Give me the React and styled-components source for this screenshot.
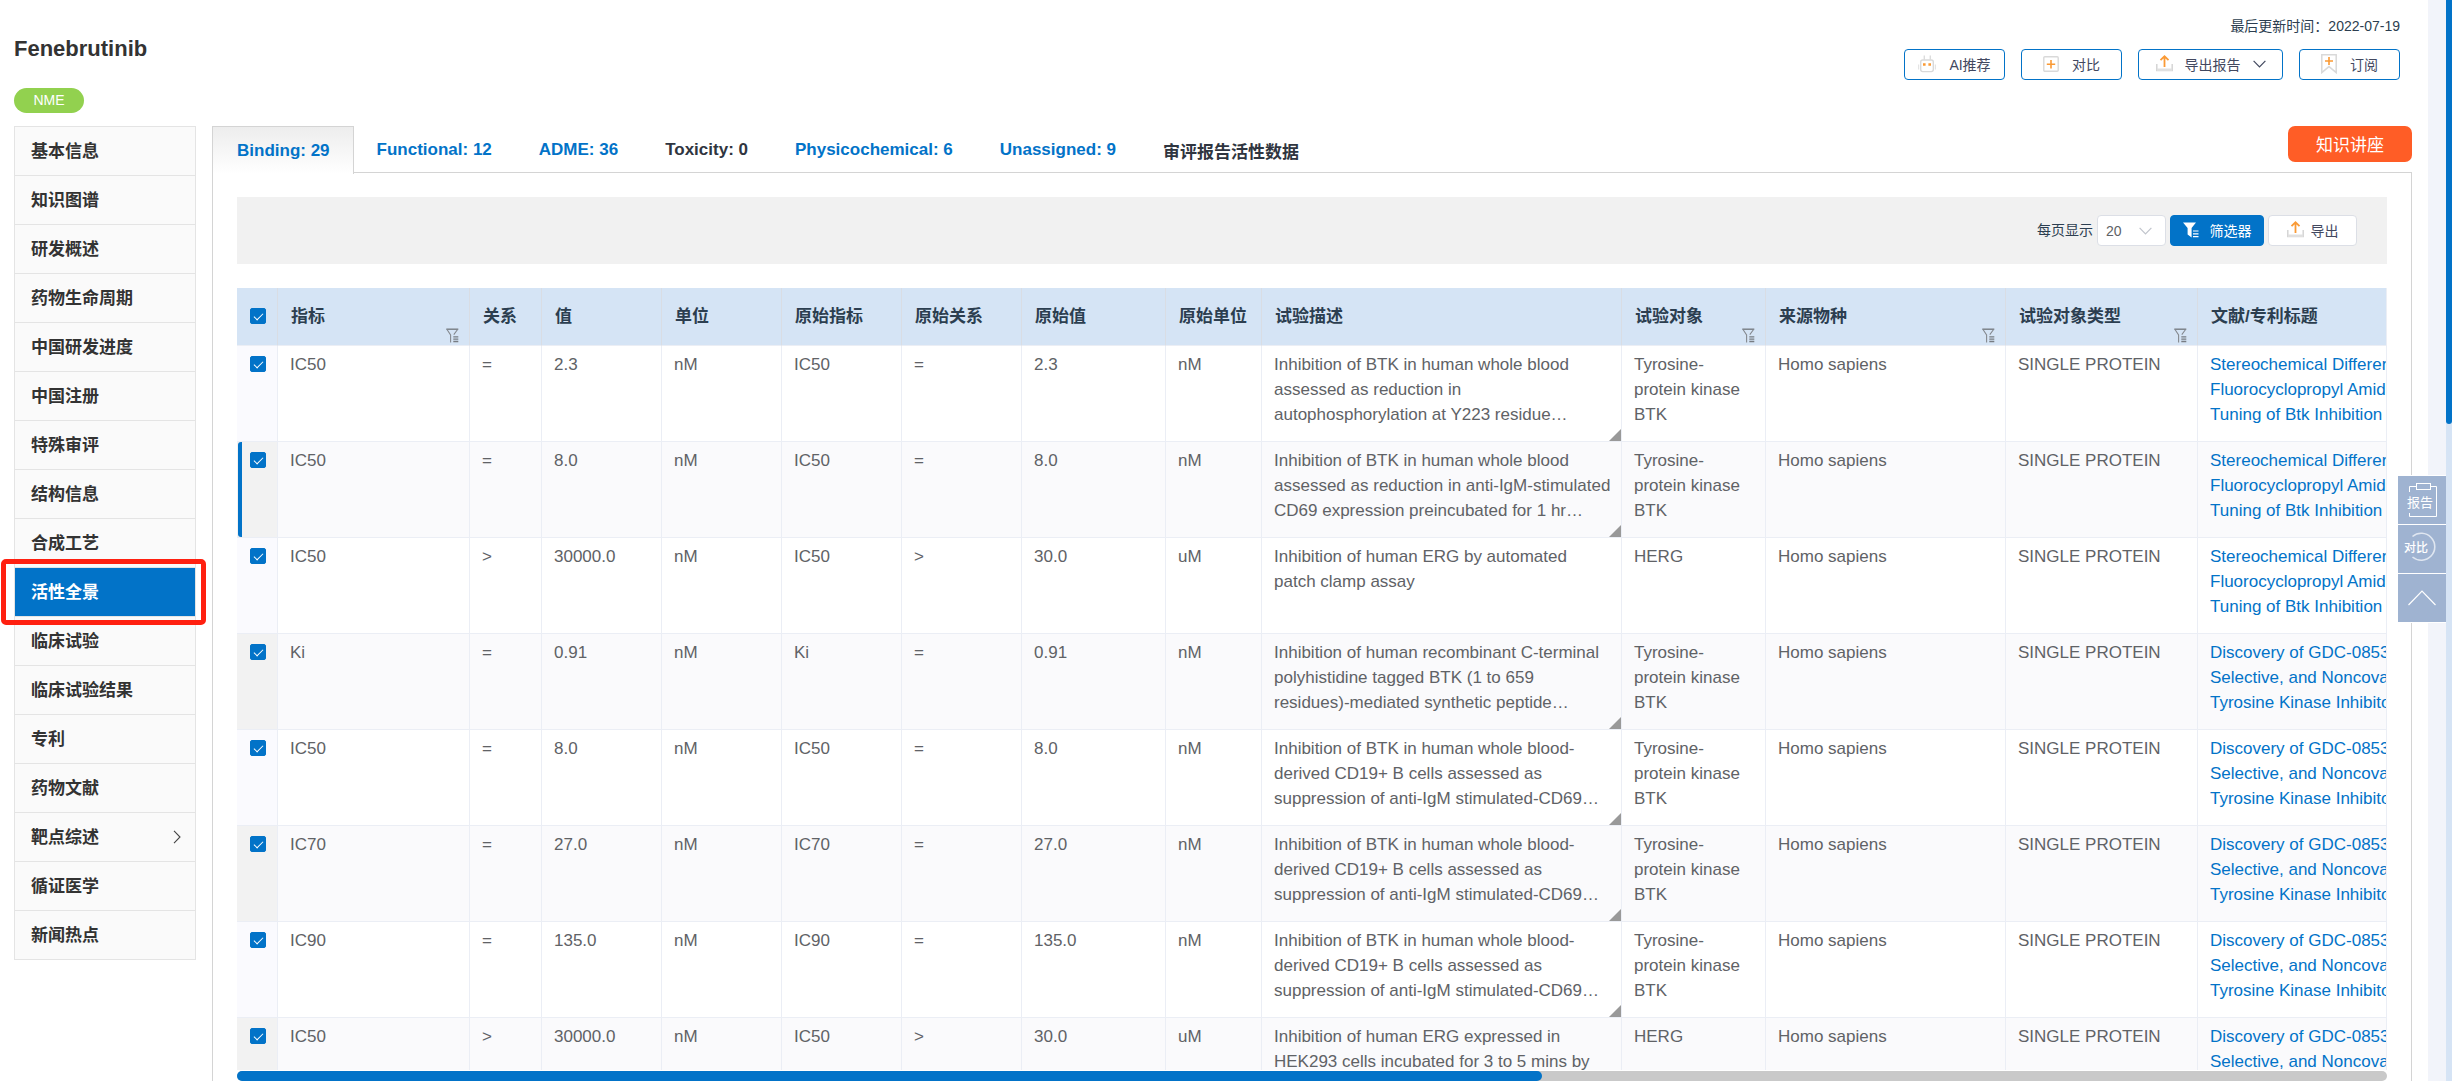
// import packages
import React from "react";
import { useState } from "react";
import styled, { createGlobalStyle } from "styled-components";

const GlobalStyle = createGlobalStyle`
  * {
    box-sizing: border-box;
  }
  body {
    margin: 0;
    background: #ffffff;
    color: #2c3e50;
    font-family: "Liberation Sans", Arial, "Noto Sans CJK SC", sans-serif;
    font-size: 17px;
    line-height: 25px;
  }
  button, select, input {
    margin: 0;
    font-family: inherit;
  }
  a {
    text-decoration: none;
  }
`;

const Page = styled.div`
  display: flex;
  height: 100vh;
  overflow: hidden;
`;

const Content = styled.div`
  display: flex;
  flex: 1;
  flex-direction: column;
  min-width: 0;
  padding: 0 16px 0 14px;
`;

const Gutter = styled.div`
  width: 18px;
  background: #f2f4fa;
`;

const PageScroll = styled.div`
  width: 6px;
  background: #d6e4f5;
`;

const PageThumb = styled.div`
  height: 424px;
  border-radius: 0 0 4px 4px;
  background: #0273c8;
`;

const Header = styled.header`
  display: flex;
  justify-content: space-between;
  height: 126px;
  padding: 14px 12px 0 0;
`;

const Title = styled.h1`
  margin: 22px 0 26px;
  color: #333333;
  font-size: 22px;
  line-height: 26px;
`;

const Badge = styled.span`
  display: flex;
  align-items: center;
  justify-content: center;
  width: 70px;
  height: 25px;
  border-radius: 13px;
  background: #92d14f;
  color: #ffffff;
  font-size: 14px;
`;

const HeaderRight = styled.div`
  display: flex;
  flex-direction: column;
  align-items: flex-end;
`;

const Updated = styled.div`
  margin-bottom: 10px;
  font-size: 14px;
`;

const Actions = styled.div`
  display: flex;
  gap: 16px;
`;

const ActionButton = styled.button`
  display: flex;
  align-items: center;
  justify-content: center;
  gap: ${(props) => (props.$wide ? "12px" : "13px")};
  min-width: ${(props) => (props.$wide ? "145px" : "101px")};
  height: 31px;
  padding: 0 12px 2px;
  border: 1px solid #0273c8;
  border-radius: 4px;
  background: #ffffff;
  color: #42485f;
  font-size: 14px;
  white-space: nowrap;
`;

const Body = styled.div`
  display: flex;
  flex: 1;
  gap: 16px;
  min-height: 0;
`;

const Sidebar = styled.nav`
  flex: none;
  width: 182px;
`;

const Menu = styled.ul`
  margin: 0;
  padding: 0;
  border: 1px solid #e4e4e4;
  list-style: none;
`;

const MenuItem = styled.li`
  position: relative;
  height: 49px;
  border-bottom: 1px solid #e4e4e4;

  &:last-child {
    height: 48px;
    border-bottom: none;
  }
`;

const MenuLink = styled.a`
  display: flex;
  align-items: center;
  justify-content: space-between;
  height: 48px;
  padding: 0 14px 0 16px;
  background: ${(props) => (props.$active ? "#0273c8" : "#fafafa")};
  color: ${(props) => (props.$active ? "#ffffff" : "#333333")};
  font-weight: bold;
`;

const Highlight = styled.div`
  position: absolute;
  z-index: 1;
  top: -9px;
  left: -14px;
  width: 205px;
  height: 66px;
  border: 5px solid #ff2010;
  border-radius: 5px;
  pointer-events: none;
`;

const Main = styled.main`
  display: flex;
  flex: 1;
  flex-direction: column;
  min-width: 0;
`;

const TabBar = styled.div`
  display: flex;
  height: 46px;
`;

const Tab = styled.button`
  height: 48px;
  padding: 0 24px 0 23px;
  border: none;
  background: none;
  color: ${(props) => (props.$plain ? "#2f3540" : "#0273c8")};
  font-size: 17px;
  font-weight: bold;
  white-space: nowrap;
  ${(props) =>
    props.$active &&
    `
    z-index: 1;
    padding: 0 23px 0 24px;
    border: 1px solid #d4d4d4;
    border-bottom: none;
    background: linear-gradient(#ededed, #ffffff);
  `}
`;

const LectureButton = styled.button`
  width: 124px;
  height: 36px;
  margin-left: auto;
  padding: 0 0 2px;
  border: none;
  border-radius: 7px;
  background: #ff5d26;
  color: #ffffff;
  font-size: 17px;
`;

const Panel = styled.section`
  display: flex;
  flex: 1;
  flex-direction: column;
  min-height: 0;
  padding: 24px 24px 0;
  border: 1px solid #d4d4d4;
  border-bottom: none;
`;

const Toolbar = styled.div`
  display: flex;
  flex: none;
  align-items: center;
  justify-content: flex-end;
  gap: 4px;
  height: 67px;
  margin-bottom: 24px;
  padding-right: 30px;
  background: #f1f1f1;
  font-size: 14px;
`;

const SelectBox = styled.span`
  position: relative;
  display: flex;

  svg {
    position: absolute;
    top: 12px;
    right: 14px;
    pointer-events: none;
  }
`;

const Select = styled.select`
  width: 69px;
  height: 31px;
  padding: 0 8px;
  border: 1px solid #dcdfe6;
  border-radius: 4px;
  background: #ffffff;
  color: #606266;
  font-size: 14px;
  appearance: none;
`;

const ToolButton = styled.button`
  display: flex;
  align-items: center;
  justify-content: center;
  gap: ${(props) => (props.$primary ? "11px" : "7px")};
  width: ${(props) => (props.$primary ? "94px" : "89px")};
  height: 31px;
  padding: 0 0 2px;
  border: 1px solid ${(props) => (props.$primary ? "#0273c8" : "#dcdfe6")};
  border-radius: 4px;
  background: ${(props) => (props.$primary ? "#0273c8" : "#ffffff")};
  color: ${(props) => (props.$primary ? "#ffffff" : "#42485f")};
  font-size: 14px;
`;

const TableWrap = styled.div`
  flex: 1;
  min-height: 0;
  overflow: hidden;
  border-right: 1px solid #ebeef5;
`;

const Table = styled.table`
  width: 2261px;
  border-spacing: 0;
  table-layout: fixed;
`;

const Th = styled.th`
  position: relative;
  height: 58px;
  padding: 0 10px 0 13px;
  border-right: 1px solid #d9dde4;
  border-bottom: 1px solid #ebeef5;
  background: #d5e4f5;
  text-align: left;
  white-space: nowrap;

  > svg {
    position: absolute;
    right: 10px;
    bottom: 2px;
  }
`;

const Td = styled.td`
  position: relative;
  height: 96px;
  padding: 6px 10px 0 12px;
  border-right: 1px solid #ebeef5;
  border-bottom: 1px solid #ebeef5;
  color: #606266;
  vertical-align: top;
`;

const CheckTh = styled(Th)`
  padding: 0 0 2px 13px;
`;

const CheckTd = styled(Td)`
  padding: 10px 0 0 13px;
  background: #fafafe;
`;

const Row = styled.tr`
  background: #ffffff;

  &:nth-child(even) {
    background: #fafafc;
  }
  &:nth-child(even) ${CheckTd} {
    background: #f2f2f2;
  }
`;

const CurrentBar = styled.span`
  position: absolute;
  top: 0;
  bottom: 0;
  left: 1px;
  width: 4px;
  border-radius: 3px 0 0 3px;
  background: #0273c8;
`;

const Corner = styled.span`
  position: absolute;
  right: 0;
  bottom: 0;
  border-bottom: 12px solid #999999;
  border-left: 12px solid transparent;
`;

const Checkbox = styled.input`
  position: relative;
  display: block;
  width: 16px;
  height: 16px;
  border: 1px solid #0273c8;
  border-radius: 2px;
  background: #ffffff;
  appearance: none;

  &:checked {
    background: #0273c8;
  }
  &:checked::after {
    content: "";
    position: absolute;
    top: 2px;
    left: 5px;
    width: 4px;
    height: 8px;
    border: solid #ffffff;
    border-width: 0 1px 1px 0;
    transform: rotate(45deg);
  }
`;

const Clamp = styled.div`
  display: -webkit-box;
  overflow: hidden;
  -webkit-box-orient: vertical;
  -webkit-line-clamp: 3;
`;

const TitleLink = styled.a`
  color: #0273c8;
`;

const TableScroll = styled.div`
  flex: none;
  height: 10px;
  margin-top: 1px;
  border-radius: 5px;
  background: #c9c9c9;
`;

const TableThumb = styled.div`
  width: 60.7%;
  height: 10px;
  border-radius: 5px;
  background: #0273c8;
`;

const FloatBar = styled.div`
  position: fixed;
  z-index: 2;
  top: 475px;
  right: 6px;
  display: flex;
  flex-direction: column;
  gap: 1px;
  padding: 1px 0;
  background: #ffffff;
`;

const FloatButton = styled.button`
  position: relative;
  display: flex;
  align-items: center;
  justify-content: center;
  width: 48px;
  height: 48px;
  padding: 0;
  border: none;
  background: #9fb3d1;
  color: #ffffff;

  svg {
    position: absolute;
    top: 0;
    left: 0;
  }
`;

const FloatText = styled.span`
  margin-right: ${(props) => (props.$bold ? "12px" : "4px")};
  margin-top: ${(props) => (props.$bold ? "-6px" : "2px")};
  font-size: ${(props) => (props.$bold ? "12px" : "13px")};
  font-weight: ${(props) => (props.$bold ? "500" : "normal")};
`;

const RobotIcon = () => (
  <svg width="18" height="18" viewBox="0 0 18 18" fill="none">
    <rect x="2.7" y="5" width="12.6" height="11.6" rx="2" stroke="#d9d9d9" strokeWidth="1.4" />
    <path d="M6.3 0.5V5M12.3 0.5V5" stroke="#dcdcdc" strokeWidth="1.4" />
    <path d="M0.6 9.5V14.5M17.4 9.5V14.5" stroke="#e4e4e4" strokeWidth="1.2" />
    <path d="M5 8.3H7.6V10.7H5ZM10.4 8.3H13V10.7H10.4Z" fill="#fa9a35" />
  </svg>
);

const PlusIcon = () => (
  <svg width="16" height="16" viewBox="0 0 16 16" fill="none">
    <rect x="0.8" y="0.8" width="14.4" height="14.4" rx="1" stroke="#d9d9d9" strokeWidth="1.4" />
    <path d="M8 4V12.4M3.8 8.2H12.2" stroke="#fa9a35" strokeWidth="1.6" />
  </svg>
);

const UploadIcon = () => (
  <svg width="17" height="17" viewBox="0 0 17 17" fill="none">
    <path d="M0.8 9V15.5H16.2V9" stroke="#d5d5d5" strokeWidth="1.5" />
    <path d="M1 13.5H16V16H1Z" fill="#e0e0e0" />
    <path d="M8.5 12V2M4.5 5.2L8.5 1.3L12.5 5.2" stroke="#fa9a35" strokeWidth="1.8" />
  </svg>
);

const BookmarkIcon = () => (
  <svg width="16" height="20" viewBox="0 0 16 20" fill="none">
    <path d="M0.8 0.8H15.2V18.6L8 12.6L0.8 18.6Z" stroke="#d9d9d9" strokeWidth="1.5" />
    <path d="M8 3V11M4 7H12" stroke="#fa9a35" strokeWidth="1.6" />
  </svg>
);

const DownIcon = ({ color = "#42485f" }) => (
  <svg width="13" height="8" viewBox="0 0 13 8" fill="none">
    <path d="M0.6 0.8L6.5 6.8L12.4 0.8" stroke={color} strokeWidth="1.2" />
  </svg>
);

const RightIcon = () => (
  <svg width="8" height="14" viewBox="0 0 8 14" fill="none">
    <path d="M1 0.8L7 7L1 13.2" stroke="#444444" strokeWidth="1.1" />
  </svg>
);

const FilterSolidIcon = () => (
  <svg width="16" height="16" viewBox="0 0 16 16">
    <path d="M0 0.5H13L8.6 6V15.5L4.6 12.5V6Z" fill="#ffffff" />
    <path d="M10 9H15.5M10 11.8H15.5M10 14.6H15.5" stroke="#ffffff" strokeWidth="1.2" />
  </svg>
);

const FilterLineIcon = () => (
  <svg width="13" height="15" viewBox="0 0 13 15" fill="none">
    <path d="M0.3 1.2H12.3" stroke="#777c83" strokeWidth="1.4" />
    <path d="M1 1.5L4.6 7V14.5M11.6 1.5L7.8 6.6" stroke="#85898f" strokeWidth="1.1" />
    <path d="M7.3 8.9H12.3M7.3 11.2H12.3M7.3 13.5H12.3" stroke="#777c83" strokeWidth="1.3" />
  </svg>
);

const menu = [
  "基本信息",
  "知识图谱",
  "研发概述",
  "药物生命周期",
  "中国研发进度",
  "中国注册",
  "特殊审评",
  "结构信息",
  "合成工艺",
  "活性全景",
  "临床试验",
  "临床试验结果",
  "专利",
  "药物文献",
  "靶点综述",
  "循证医学",
  "新闻热点",
];

const tabs = [
  { label: "Binding: 29" },
  { label: "Functional: 12" },
  { label: "ADME: 36" },
  { label: "Toxicity: 0", plain: true },
  { label: "Physicochemical: 6" },
  { label: "Unassigned: 9" },
  { label: "审评报告活性数据", plain: true },
];

const columns = [
  { label: "指标", width: 192, filter: true },
  { label: "关系", width: 72 },
  { label: "值", width: 120 },
  { label: "单位", width: 120 },
  { label: "原始指标", width: 120 },
  { label: "原始关系", width: 120 },
  { label: "原始值", width: 144 },
  { label: "原始单位", width: 96 },
  { label: "试验描述", width: 360 },
  { label: "试验对象", width: 144, filter: true },
  { label: "来源物种", width: 240, filter: true },
  { label: "试验对象类型", width: 192, filter: true },
  { label: "文献/专利标题", width: 300 },
];

const stereo =
  "Stereochemical Differences in Fluorocyclopropyl Amides Enable Tuning of Btk Inhibition and Off-Target Activity";
const discovery =
  "Discovery of GDC-0853: A Potent, Selective, and Noncovalent Bruton's Tyrosine Kinase Inhibitor in Early Clinical Development";
const btk = "Tyrosine-protein kinase BTK";
const cd19 =
  "Inhibition of BTK in human whole blood-derived CD19+ B cells assessed as suppression of anti-IgM stimulated-CD69…";

const rows = [
  {
    cells: ["IC50", "=", "2.3", "nM", "IC50", "=", "2.3", "nM"],
    desc: "Inhibition of BTK in human whole blood assessed as reduction in autophosphorylation at Y223 residue…",
    target: btk,
    title: stereo,
    more: true,
  },
  {
    cells: ["IC50", "=", "8.0", "nM", "IC50", "=", "8.0", "nM"],
    desc: "Inhibition of BTK in human whole blood assessed as reduction in anti-IgM-stimulated CD69 expression preincubated for 1 hr…",
    target: btk,
    title: stereo,
    more: true,
    current: true,
  },
  {
    cells: ["IC50", ">", "30000.0", "nM", "IC50", ">", "30.0", "uM"],
    desc: "Inhibition of human ERG by automated patch clamp assay",
    target: "HERG",
    title: stereo,
  },
  {
    cells: ["Ki", "=", "0.91", "nM", "Ki", "=", "0.91", "nM"],
    desc: "Inhibition of human recombinant C-terminal polyhistidine tagged BTK (1 to 659 residues)-mediated synthetic peptide…",
    target: btk,
    title: discovery,
    more: true,
  },
  {
    cells: ["IC50", "=", "8.0", "nM", "IC50", "=", "8.0", "nM"],
    desc: cd19,
    target: btk,
    title: discovery,
    more: true,
  },
  {
    cells: ["IC70", "=", "27.0", "nM", "IC70", "=", "27.0", "nM"],
    desc: cd19,
    target: btk,
    title: discovery,
    more: true,
  },
  {
    cells: ["IC90", "=", "135.0", "nM", "IC90", "=", "135.0", "nM"],
    desc: cd19,
    target: btk,
    title: discovery,
    more: true,
  },
  {
    cells: ["IC50", ">", "30000.0", "nM", "IC50", ">", "30.0", "uM"],
    desc: "Inhibition of human ERG expressed in HEK293 cells incubated for 3 to 5 mins by",
    target: "HERG",
    title: discovery,
  },
];

function ActivityTable() {
  const [checked, setChecked] = useState(rows.map(() => true));
  const all = checked.every((c) => c);

  const toggle = (index) => {
    setChecked(checked.map((c, i) => (i === index ? !c : c)));
  };

  return (
    <Table>
      <colgroup>
        <col width="41" />
        {columns.map((column) => (
          <col key={column.label} width={column.width} />
        ))}
      </colgroup>
      <thead>
        <tr>
          <CheckTh>
            <Checkbox
              type="checkbox"
              aria-label="全选"
              checked={all}
              onChange={() => setChecked(rows.map(() => !all))}
            />
          </CheckTh>
          {columns.map((column) => (
            <Th key={column.label}>
              {column.label}
              {column.filter ? <FilterLineIcon /> : null}
            </Th>
          ))}
        </tr>
      </thead>
      <tbody>
        {rows.map((row, index) => (
          <Row key={index}>
            <CheckTd>
              {row.current ? <CurrentBar /> : null}
              <Checkbox
                type="checkbox"
                aria-label={row.cells[0]}
                checked={checked[index]}
                onChange={() => toggle(index)}
              />
            </CheckTd>
            {row.cells.map((cell, i) => (
              <Td key={i}>{cell}</Td>
            ))}
            <Td>
              <Clamp>{row.desc}</Clamp>
              {row.more ? <Corner /> : null}
            </Td>
            <Td>{row.target}</Td>
            <Td>Homo sapiens</Td>
            <Td>SINGLE PROTEIN</Td>
            <Td>
              <Clamp>
                <TitleLink href="#">{row.title}</TitleLink>
              </Clamp>
            </Td>
          </Row>
        ))}
      </tbody>
    </Table>
  );
}

function App() {
  const [tab, setTab] = useState(0);
  const [pageSize, setPageSize] = useState("20");

  return (
    <Page>
      <GlobalStyle />
      <Content>
        <Header>
          <div>
            <Title>Fenebrutinib</Title>
            <Badge>NME</Badge>
          </div>
          <HeaderRight>
            <Updated>最后更新时间：2022-07-19</Updated>
            <Actions>
              <ActionButton>
                <RobotIcon />
                AI推荐
              </ActionButton>
              <ActionButton>
                <PlusIcon />
                对比
              </ActionButton>
              <ActionButton $wide>
                <UploadIcon />
                导出报告
                <DownIcon />
              </ActionButton>
              <ActionButton>
                <BookmarkIcon />
                订阅
              </ActionButton>
            </Actions>
          </HeaderRight>
        </Header>
        <Body>
          <Sidebar>
            <Menu>
              {menu.map((item) => (
                <MenuItem key={item}>
                  <MenuLink href="#" $active={item === "活性全景"}>
                    {item}
                    {item === "靶点综述" ? <RightIcon /> : null}
                  </MenuLink>
                  {item === "活性全景" ? <Highlight /> : null}
                </MenuItem>
              ))}
            </Menu>
          </Sidebar>
          <Main>
            <TabBar>
              {tabs.map((item, index) => (
                <Tab
                  key={item.label}
                  $active={index === tab}
                  $plain={item.plain}
                  onClick={() => setTab(index)}
                >
                  {item.label}
                </Tab>
              ))}
              <LectureButton>知识讲座</LectureButton>
            </TabBar>
            <Panel>
              <Toolbar>
                <label htmlFor="pageSize">每页显示</label>
                <SelectBox>
                  <Select
                    id="pageSize"
                    value={pageSize}
                    onChange={(e) => setPageSize(e.target.value)}
                  >
                    <option value="20">20</option>
                    <option value="50">50</option>
                    <option value="100">100</option>
                  </Select>
                  <DownIcon color="#c0c4cc" />
                </SelectBox>
                <ToolButton $primary>
                  <FilterSolidIcon />
                  筛选器
                </ToolButton>
                <ToolButton>
                  <UploadIcon />
                  导出
                </ToolButton>
              </Toolbar>
              <TableWrap>
                <ActivityTable />
              </TableWrap>
              <TableScroll>
                <TableThumb />
              </TableScroll>
            </Panel>
          </Main>
        </Body>
      </Content>
      <Gutter />
      <PageScroll>
        <PageThumb />
      </PageScroll>
      <FloatBar>
        <FloatButton>
          <svg width="48" height="48" viewBox="0 0 48 48" fill="none" stroke="#ffffff">
            <path d="M11.5 16V10.5H18M33 10.5H38.5V40.5H11.5V37" />
            <rect x="18.5" y="7.5" width="14" height="6" />
          </svg>
          <FloatText>报告</FloatText>
        </FloatButton>
        <FloatButton>
          <svg width="48" height="48" viewBox="0 0 48 48" fill="none" stroke="#dfe6f0" strokeWidth="1.6">
            <path d="M14.5 11.5A13.5 13.5 0 1 1 14.5 32" />
          </svg>
          <FloatText $bold>对比</FloatText>
        </FloatButton>
        <FloatButton aria-label="返回顶部">
          <svg width="48" height="48" viewBox="0 0 48 48" fill="none" stroke="#ffffff" strokeWidth="1.2">
            <path d="M10.5 31L24 17L37.5 31" />
          </svg>
        </FloatButton>
      </FloatBar>
    </Page>
  );
}

export default App;
